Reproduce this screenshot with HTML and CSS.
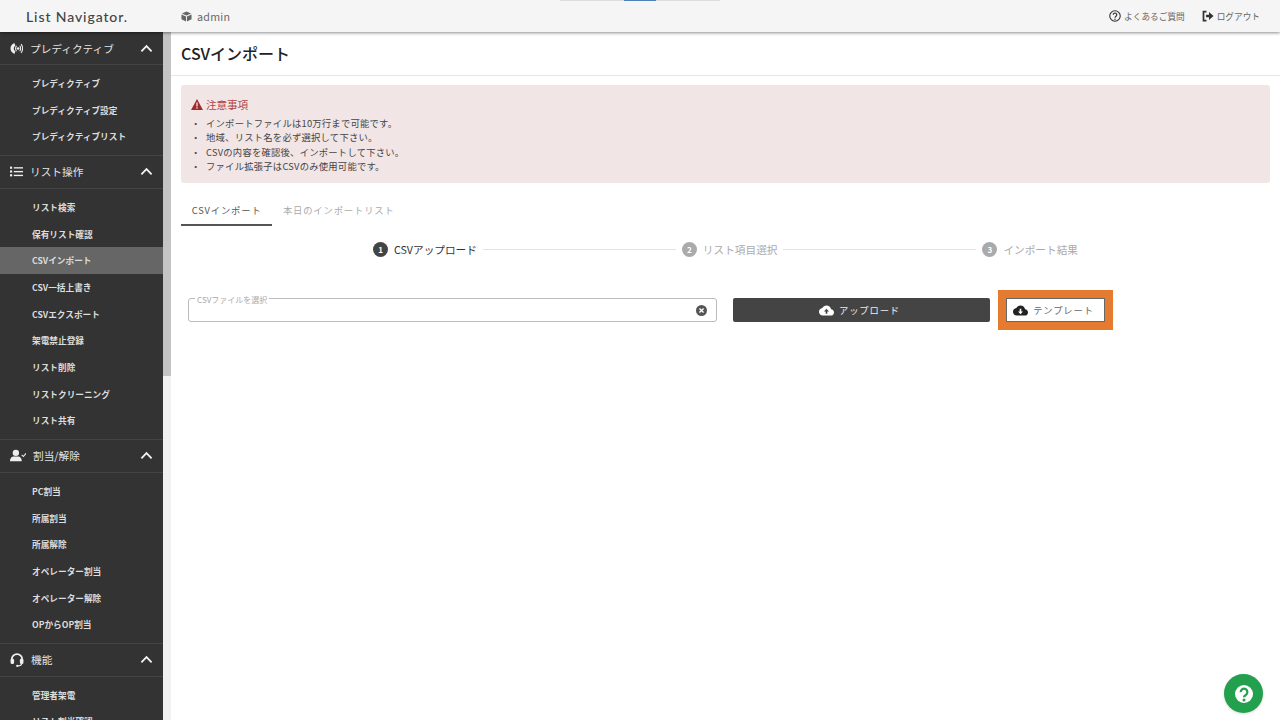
FILE: index.html
```html
<!DOCTYPE html>
<html lang="ja">
<head>
<meta charset="utf-8">
<title>CSVインポート</title>
<link rel="stylesheet" href="styles.css">
</head>
<body>
<div class="app">
  <header class="topbar">
    <div class="logo">List Navigator.</div>
    <div class="account">
      <svg class="cube" viewBox="0 0 24 24"><path d="M12 1l10 4.500L12 10 2 5.500zM1 7.500l10 4.500v11L1 18zM23 7.500L13 12v11l10-5z"/></svg>
      <span>admin</span>
    </div>
    <div class="top-links">
      <a class="top-link">
        <svg class="top-icon" viewBox="0 0 24 24"><circle cx="12" cy="12" r="10.500" fill="none" stroke="#333" stroke-width="2.200"/><path d="M8.500 9.500a3.500 3.500 0 1 1 5.500 2.900c-1.300.9-2 1.500-2 3" fill="none" stroke="#333" stroke-width="2.400"/><circle cx="12" cy="18.500" r="1.500" fill="#333"/></svg>
        <span>よくあるご質問</span>
      </a>
      <a class="top-link">
        <svg class="top-icon" viewBox="0 0 24 24"><path d="M9 3H3v18h6" fill="none" stroke="#333" stroke-width="3.500"/><path d="M8 9.500h6V4l9 8-9 8v-5.500H8z" fill="#333"/></svg>
        <span>ログアウト</span>
      </a>
    </div>
    <div class="top-marker"><span class="top-marker-on"></span></div>
  </header>

  <div class="layout">
    <aside class="sidebar">
      <section class="group">
        <div class="group-head">
          <svg class="group-icon" viewBox="0 0 24 24"><path d="M8 2C2 5 1 9 1 12s1 7 7 10l2-5c-2-1-3-3-3-5s1-4 3-5z" fill="#eee"/><circle cx="15" cy="12" r="2.500" fill="#eee"/><path d="M12 7c-2 3-2 7 0 10M18 7c2 3 2 7 0 10M20.500 4c3.500 5 3.500 11 0 16" fill="none" stroke="#eee" stroke-width="2"/></svg>
          <span class="group-title">プレディクティブ</span>
          <svg class="chev" viewBox="0 0 14 9"><path d="M1.500 7.500L7 2l5.500 5.500"/></svg>
        </div>
        <ul class="items">
          <li>プレディクティブ</li>
          <li>プレディクティブ設定</li>
          <li>プレディクティブリスト</li>
        </ul>
      </section>
      <section class="group">
        <div class="group-head">
          <svg class="group-icon" viewBox="0 0 24 24" fill="#eee"><rect x="0" y="3" width="4" height="4"/><rect x="0" y="10" width="4" height="4"/><rect x="0" y="17" width="4" height="4"/><rect x="7" y="4" width="17" height="2.500"/><rect x="7" y="11" width="17" height="2.500"/><rect x="7" y="18" width="17" height="2.500"/></svg>
          <span class="group-title">リスト操作</span>
          <svg class="chev" viewBox="0 0 14 9"><path d="M1.500 7.500L7 2l5.500 5.500"/></svg>
        </div>
        <ul class="items">
          <li>リスト検索</li>
          <li>保有リスト確認</li>
          <li class="active">CSVインポート</li>
          <li>CSV一括上書き</li>
          <li>CSVエクスポート</li>
          <li>架電禁止登録</li>
          <li>リスト削除</li>
          <li>リストクリーニング</li>
          <li>リスト共有</li>
        </ul>
      </section>
      <section class="group">
        <div class="group-head">
          <svg class="group-icon icon-wide" viewBox="0 0 30 24" fill="#eee"><circle cx="11" cy="7" r="6"/><path d="M0 23c0-7 4-9 7-9h8c3 0 7 2 7 9z"/><path d="M22 11l3 3 5-6" fill="none" stroke="#eee" stroke-width="2"/></svg>
          <span class="group-title">割当/解除</span>
          <svg class="chev" viewBox="0 0 14 9"><path d="M1.500 7.500L7 2l5.500 5.500"/></svg>
        </div>
        <ul class="items">
          <li>PC割当</li>
          <li>所属割当</li>
          <li>所属解除</li>
          <li>オペレーター割当</li>
          <li>オペレーター解除</li>
          <li>OPからOP割当</li>
        </ul>
      </section>
      <section class="group">
        <div class="group-head">
          <svg class="group-icon icon-head" viewBox="0 0 24 24"><path d="M3 14v-3a9 9 0 0 1 18 0v3" fill="none" stroke="#eee" stroke-width="3"/><rect x="1" y="10" width="6" height="9" rx="2.500" fill="#eee"/><rect x="17" y="10" width="6" height="9" rx="2.500" fill="#eee"/><path d="M20 18c0 3-3 4-7 4" fill="none" stroke="#eee" stroke-width="2"/><circle cx="12.500" cy="22" r="2" fill="#eee"/></svg>
          <span class="group-title">機能</span>
          <svg class="chev" viewBox="0 0 14 9"><path d="M1.500 7.500L7 2l5.500 5.500"/></svg>
        </div>
        <ul class="items">
          <li>管理者架電</li>
          <li>リスト割当確認</li>
        </ul>
      </section>
    </aside>
    <div class="scrollbar"><div class="scroll-thumb"></div></div>

    <main class="main">
      <div class="title-row"><h1 class="page-title">CSVインポート</h1></div>
      <div class="content">
        <div class="alert">
          <div class="alert-title">
            <svg class="warn" viewBox="0 0 24 22"><path d="M12 0l12 22H0z" fill="#a02c2c"/><rect x="10.700" y="7" width="2.600" height="8" fill="#f2e5e5"/><rect x="10.700" y="16.500" width="2.600" height="2.800" fill="#f2e5e5"/></svg>
            <span>注意事項</span>
          </div>
          <ul class="alert-list">
            <li>インポートファイルは10万行まで可能です。</li>
            <li>地域、リスト名を必ず選択して下さい。</li>
            <li>CSVの内容を確認後、インポートして下さい。</li>
            <li>ファイル拡張子はCSVのみ使用可能です。</li>
          </ul>
        </div>

        <div class="tabs">
          <div class="tab tab-on">CSVインポート</div>
          <div class="tab">本日のインポートリスト</div>
        </div>

        <div class="stepper">
          <div class="step step-on"><span class="step-num">1</span><span>CSVアップロード</span></div>
          <div class="step-line"></div>
          <div class="step"><span class="step-num">2</span><span>リスト項目選択</span></div>
          <div class="step-line"></div>
          <div class="step"><span class="step-num">3</span><span>インポート結果</span></div>
        </div>

        <div class="upload-row">
          <div class="file-field">
            <span class="file-label">CSVファイルを選択</span>
            <svg class="clear" viewBox="0 0 24 24"><circle cx="12" cy="12" r="12" fill="#555"/><path d="M7.500 7.500l9 9M16.500 7.500l-9 9" stroke="#fff" stroke-width="3"/></svg>
          </div>
          <button class="btn btn-dark">
            <svg class="cloud" viewBox="0 0 24 24"><path fill="#fff" d="M19.350 10.040C18.670 6.590 15.640 4 12 4 9.110 4 6.600 5.640 5.350 8.040 2.340 8.360 0 10.910 0 14c0 3.310 2.690 6 6 6h13c2.760 0 5-2.240 5-5 0-2.640-2.050-4.780-4.650-4.960z"/><path fill="#444" d="M12 9l4 4.500h-2.700V17h-2.600v-3.500H8z"/></svg>
            <span>アップロード</span>
          </button>
          <button class="btn btn-light">
            <svg class="cloud" viewBox="0 0 24 24"><path fill="#222" d="M19.350 10.040C18.670 6.590 15.640 4 12 4 9.110 4 6.600 5.640 5.350 8.040 2.340 8.360 0 10.910 0 14c0 3.310 2.690 6 6 6h13c2.760 0 5-2.240 5-5 0-2.640-2.050-4.780-4.650-4.960z"/><path fill="#fff" d="M12 18l4-4.500h-2.700V9h-2.600v4.500H8z"/></svg>
            <span>テンプレート</span>
          </button>
        </div>
      </div>
    </main>
  </div>

  <div class="help">
    <svg class="help-icon" viewBox="0 0 24 24"><circle cx="12" cy="12" r="12" fill="#fff"/><path d="M7.500 9.500a4.500 4.500 0 1 1 7 3.700c-1.600 1-2.500 1.500-2.500 3" fill="none" stroke="#22a04d" stroke-width="3"/><circle cx="12" cy="20" r="2" fill="#22a04d"/></svg>
  </div>
</div>
</body>
</html>
```
FILE: styles.css
```css
* { box-sizing: border-box; }
html, body { margin: 0; height: 100%; overflow: hidden; }
body {
  font-family: "Noto Sans CJK JP", "Noto Sans", sans-serif;
  color: #333;
  background: #fff;
}
ul { list-style: none; margin: 0; padding: 0; }
h1 { margin: 0; }

.app { height: 720px; display: flex; flex-direction: column; position: relative; }

/* top bar */
.topbar {
  position: relative;
  z-index: 2;
  flex: 0 0 32px;
  height: 32px;
  display: flex;
  align-items: center;
  background: #f5f5f5;
  box-shadow: 0 1px 3px rgba(0, 0, 0, .45);
}
.logo {
  width: 181px;
  padding-left: 26px;
  font-family: "Lato", sans-serif;
  font-size: 14px;
  font-weight: 500;
  letter-spacing: .9px;
  color: #444;
}
.account { display: flex; align-items: center; gap: 5px; font-size: 10.670px; color: #666; letter-spacing: .3px; }
.cube { width: 11px; height: 11px; fill: #666; }
.top-links { margin-left: auto; padding-right: 20px; display: flex; gap: 17px; }
.top-link { display: flex; align-items: center; gap: 3px; font-size: 8.670px; color: #666; }
.top-icon { width: 12px; height: 12px; }
.top-marker {
  position: absolute;
  left: 560px;
  top: 0;
  width: 160px;
  height: 1px;
  display: flex;
  justify-content: center;
  background: #ddd;
}
.top-marker-on { width: 32px; background: #4f82b4; }

/* sidebar */
.layout { flex: 1; min-height: 0; display: flex; }
.sidebar { flex: 0 0 163px; overflow: hidden; background: #333; color: #eee; }
.group { border-bottom: 1px solid #444; padding-bottom: 5px; }
.group-head {
  height: 33px;
  display: flex;
  align-items: center;
  padding: 0 10px;
  border-bottom: 1px solid #444;
  font-size: 10.670px;
}
.group-icon { width: 13px; height: 13px; flex: none; }
.icon-wide { width: 16px; }
.icon-head { width: 14px; height: 14px; }
.group-title { margin-left: 7px; flex: 1; color: #e4e4e4; }
.chev { width: 13px; height: 9px; fill: none; stroke: #f2f2f2; stroke-width: 2; flex: none; }
.items { padding-top: 5px; }
.items li {
  height: 26.670px;
  line-height: 26.670px;
  padding-left: 32px;
  font-size: 8.670px;
  font-weight: 700;
  color: #ddd;
}
.items .active { background: #666; }

.scrollbar { flex: 0 0 8px; background: #f1f1f1; }
.scroll-thumb { height: 344px; background: #c4c4c4; }

/* main */
.main { flex: 1; min-width: 0; }
.title-row {
  height: 44px;
  padding: 0 10px 2px;
  display: flex;
  align-items: center;
  border-bottom: 1px solid #e6e6e6;
}
.page-title { font-size: 16px; font-weight: 500; color: #222; line-height: 1; }
.content { padding: 9px 10px 0; }

.alert { height: 98px; padding: 11px 11px 0 10px; background: #f2e5e5; border-radius: 3px; }
.alert-title { display: flex; align-items: center; gap: 3px; height: 16px; font-size: 10.670px; letter-spacing: -.15px; color: #b04545; }
.warn { width: 12px; height: 11px; }
.alert-list { margin-top: 4px; font-size: 9.330px; line-height: 14.400px; letter-spacing: .22px; color: #444; }
.alert-list li { display: flex; }
.alert-list li::before { content: "・"; width: 15px; letter-spacing: 0; }

.tabs { display: flex; margin-top: 14px; height: 29px; }
.tab {
  padding: 0 10.670px;
  line-height: 27px;
  font-size: 9.330px;
  letter-spacing: .83px;
  color: #aaa;
}
.tab-on { color: #555; border-bottom: 2px solid #555; }

.stepper { display: flex; align-items: center; gap: 6px; height: 24px; margin-top: 11px; padding: 0 192px; }
.step { display: flex; align-items: center; gap: 6px; font-size: 10.670px; color: #aaa; white-space: nowrap; }
.step-on { color: #333; }
.step-num {
  width: 15px;
  height: 15px;
  border-radius: 50%;
  display: flex;
  align-items: center;
  justify-content: center;
  background: #aaa;
  color: #fff;
  font-size: 8px;
  font-weight: 700;
}
.step-on .step-num { background: #444; }
.step-line { flex: 1; height: 1px; background: #e2e2e2; }

.upload-row { display: flex; align-items: flex-start; gap: 16px; margin-top: 37px; padding: 0 7px; }
.file-field {
  position: relative;
  flex: 0 0 529px;
  height: 24px;
  display: flex;
  align-items: center;
  justify-content: flex-end;
  padding-right: 10px;
  border: 1px solid #bbb;
  border-radius: 3px;
}
.file-label {
  position: absolute;
  left: 6px;
  top: -4px;
  padding: 0 2px;
  font-size: 8px;
  line-height: 10px;
  color: #aaa;
  background: #fff;
}
.clear { width: 11px; height: 11px; margin-right: -1px; }
.btn {
  height: 24px;
  display: flex;
  align-items: center;
  justify-content: center;
  gap: 5px;
  font-family: inherit;
  font-size: 9.330px;
  letter-spacing: .83px;
  padding: 0 4px 0 0;
}
.btn-dark { flex: 0 0 257px; border: 0; border-radius: 2px; background: #444; color: #eee; }
.btn-light {
  flex: 0 0 99px;
  border: 1px solid #666;
  border-radius: 0;
  background: #fff;
  color: #666;
  outline: 8px solid #e47b30;
}
.cloud { width: 15px; height: 15px; }

.help {
  position: absolute;
  left: 1224px;
  top: 674px;
  width: 39px;
  height: 39px;
  border-radius: 50%;
  display: flex;
  align-items: center;
  justify-content: center;
  background: #22a04d;
  box-shadow: 0 1px 3px rgba(0, 0, 0, .15);
}
.help-icon { width: 18px; height: 18px; }
```
